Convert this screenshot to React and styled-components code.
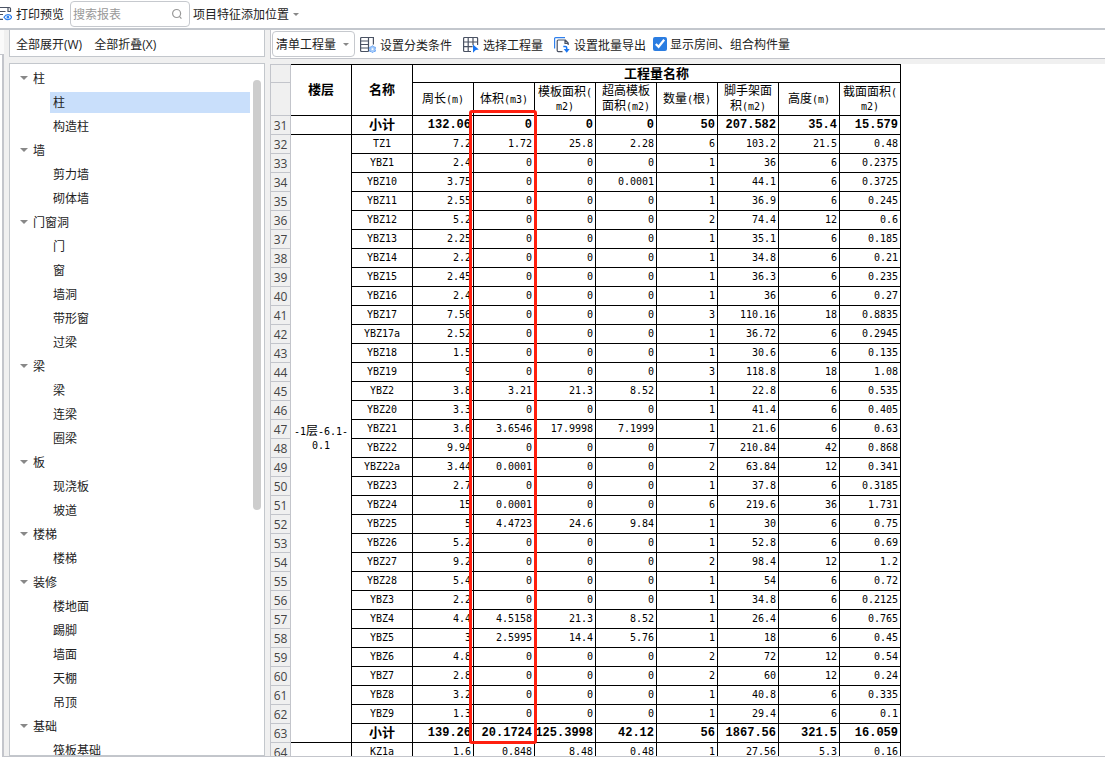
import React, { useState } from "react";
import styled, { createGlobalStyle } from "styled-components";

const GlobalStyle = createGlobalStyle`
  * {
    box-sizing: border-box;
  }
  body {
    margin: 0;
    background: #fff;
    color: #222;
    font-family: "Open Sans", "Noto Sans CJK SC", sans-serif;
    font-size: 12px;
  }
  button, input, select {
    font: inherit;
    color: inherit;
  }
`;

const treeData = [
  { name: "柱", items: ["柱", "构造柱"] },
  { name: "墙", items: ["剪力墙", "砌体墙"] },
  { name: "门窗洞", items: ["门", "窗", "墙洞", "带形窗", "过梁"] },
  { name: "梁", items: ["梁", "连梁", "圈梁"] },
  { name: "板", items: ["现浇板", "坡道"] },
  { name: "楼梯", items: ["楼梯"] },
  { name: "装修", items: ["楼地面", "踢脚", "墙面", "天棚", "吊顶"] },
  { name: "基础", items: ["筏板基础"] },
];

const columns = [
  [["周长", "(m)"]],
  [["体积", "(m3)"]],
  [["模板面积", "("], ["", "m2)"]],
  [["超高模板", ""], ["面积", "(m2)"]],
  [["数量", "("], ["根", ")"]],
  [["脚手架面", ""], ["积", "(m2)"]],
  [["高度", "(m)"]],
  [["截面面积", "("], ["", "m2)"]],
];

const subtotal = ["132.06", "0", "0", "0", "50", "207.582", "35.4", "15.579"];

const floorRows = [
  ["TZ1", "7.2", "1.72", "25.8", "2.28", "6", "103.2", "21.5", "0.48"],
  ["YBZ1", "2.4", "0", "0", "0", "1", "36", "6", "0.2375"],
  ["YBZ10", "3.75", "0", "0", "0.0001", "1", "44.1", "6", "0.3725"],
  ["YBZ11", "2.55", "0", "0", "0", "1", "36.9", "6", "0.245"],
  ["YBZ12", "5.2", "0", "0", "0", "2", "74.4", "12", "0.6"],
  ["YBZ13", "2.25", "0", "0", "0", "1", "35.1", "6", "0.185"],
  ["YBZ14", "2.2", "0", "0", "0", "1", "34.8", "6", "0.21"],
  ["YBZ15", "2.45", "0", "0", "0", "1", "36.3", "6", "0.235"],
  ["YBZ16", "2.4", "0", "0", "0", "1", "36", "6", "0.27"],
  ["YBZ17", "7.56", "0", "0", "0", "3", "110.16", "18", "0.8835"],
  ["YBZ17a", "2.52", "0", "0", "0", "1", "36.72", "6", "0.2945"],
  ["YBZ18", "1.5", "0", "0", "0", "1", "30.6", "6", "0.135"],
  ["YBZ19", "9", "0", "0", "0", "3", "118.8", "18", "1.08"],
  ["YBZ2", "3.8", "3.21", "21.3", "8.52", "1", "22.8", "6", "0.535"],
  ["YBZ20", "3.3", "0", "0", "0", "1", "41.4", "6", "0.405"],
  ["YBZ21", "3.6", "3.6546", "17.9998", "7.1999", "1", "21.6", "6", "0.63"],
  ["YBZ22", "9.94", "0", "0", "0", "7", "210.84", "42", "0.868"],
  ["YBZ22a", "3.44", "0.0001", "0", "0", "2", "63.84", "12", "0.341"],
  ["YBZ23", "2.7", "0", "0", "0", "1", "37.8", "6", "0.3185"],
  ["YBZ24", "15", "0.0001", "0", "0", "6", "219.6", "36", "1.731"],
  ["YBZ25", "5", "4.4723", "24.6", "9.84", "1", "30", "6", "0.75"],
  ["YBZ26", "5.2", "0", "0", "0", "1", "52.8", "6", "0.69"],
  ["YBZ27", "9.2", "0", "0", "0", "2", "98.4", "12", "1.2"],
  ["YBZ28", "5.4", "0", "0", "0", "1", "54", "6", "0.72"],
  ["YBZ3", "2.2", "0", "0", "0", "1", "34.8", "6", "0.2125"],
  ["YBZ4", "4.4", "4.5158", "21.3", "8.52", "1", "26.4", "6", "0.765"],
  ["YBZ5", "3", "2.5995", "14.4", "5.76", "1", "18", "6", "0.45"],
  ["YBZ6", "4.8", "0", "0", "0", "2", "72", "12", "0.54"],
  ["YBZ7", "2.8", "0", "0", "0", "2", "60", "12", "0.24"],
  ["YBZ8", "3.2", "0", "0", "0", "1", "40.8", "6", "0.335"],
  ["YBZ9", "1.3", "0", "0", "0", "1", "29.4", "6", "0.1"],
  ["小计", "139.26", "20.1724", "125.3998", "42.12", "56", "1867.56", "321.5", "16.059"],
];

const nextFloorRow = ["KZ1a", "1.6", "0.848", "8.48", "0.48", "1", "27.56", "5.3", "0.16"];

const Page = styled.div`
  display: flex;
  flex-direction: column;
  height: 100vh;
  padding-bottom: 18px;
  overflow: hidden;
`;

const TopBar = styled.header`
  display: flex;
  align-items: center;
  flex: none;
  height: 30px;
  border-bottom: 2px solid #c3c7cd;
  white-space: nowrap;
`;

const PlainButton = styled.button`
  display: flex;
  align-items: center;
  gap: 4px;
  height: 24px;
  padding: 0;
  border: 0;
  background: none;
  white-space: nowrap;
`;

const SearchBox = styled.label`
  display: flex;
  align-items: center;
  width: 120px;
  height: 26px;
  margin: 0 3px 0 6px;
  padding: 0 6px 0 2px;
  border: 1px solid #c6c9ce;
  border-radius: 4px;
  color: #999;

  input {
    flex: 1;
    min-width: 0;
    padding: 0;
    border: 0;
    outline: 0;
    background: none;
  }
  input::placeholder {
    color: #999;
    opacity: 1;
  }
`;

const Caret = styled.span`
  width: 0;
  border: ${(p) => p.$size}px solid transparent;
  border-top-color: #888;
  border-bottom: 0;
`;

const Body = styled.div`
  display: flex;
  flex: 1;
  min-height: 0;
  background: #f0f0f0;
  border-bottom: 1px solid #c3c5cb;
`;

const Rail = styled.div`
  flex: none;
  width: 4px;
  margin-right: 5px;
  padding-top: 24px;
  background: #fafafa;

  &::after {
    content: "";
    display: block;
    height: 100%;
    background: #fff;
    border-top: 1px solid #c3c5cb;
    border-right: 2px solid #c3c5cb;
  }
`;

const Sidebar = styled.aside`
  display: flex;
  flex-direction: column;
  flex: none;
  gap: 6px;
  width: 256px;
  margin-right: 5px;
`;

const SidebarActions = styled.div`
  display: flex;
  align-items: center;
  gap: 12px;
  flex: none;
  height: 27px;
  padding: 2px 6px 0;
  background: #fff;
  border: 1px solid #c3c7cc;
  border-top: 0;
`;

const TreePanel = styled.nav`
  display: flex;
  flex: 1;
  min-height: 0;
  background: #fff;
  border: 1px solid #c3c7cc;
  overflow: hidden;
`;

const Tree = styled.ul`
  flex: 1;
  margin: 0;
  padding: 2px 0 0;
  list-style: none;

  ul {
    margin: 0;
    padding: 0 0 0 40px;
    list-style: none;
  }
  ul li {
    height: 24px;
    padding-top: 2px;
  }
`;

const Group = styled.button`
  display: flex;
  align-items: center;
  gap: 5px;
  width: 100%;
  height: 24px;
  padding: 0 0 0 10px;
  border: 0;
  background: none;
`;

const Leaf = styled.button`
  display: block;
  width: 100%;
  height: 21px;
  padding: 0 3px;
  border: 0;
  background: ${(p) => (p.$selected ? "#c9dffb" : "none")};
  line-height: 21px;
  text-align: left;
`;

const Scrollbar = styled.div`
  flex: none;
  width: 8px;
  height: 430px;
  margin: 16px 3px 0;
  border-radius: 4px;
  background: #cdcdcd;
`;

const Content = styled.main`
  display: flex;
  flex: 1;
  flex-direction: column;
  gap: 5px;
  min-width: 0;
`;

const Toolbar = styled.div`
  display: flex;
  align-items: center;
  flex: none;
  height: 29px;
  padding-left: 1px;
  background: #fff;
  border: solid #c3c5cb;
  border-width: 0 0 1px 1px;
`;

const Picker = styled.div`
  display: flex;
  align-items: center;
  width: 83px;
  height: 26px;
  padding-right: 5px;
  border: 1px solid #c6c9ce;
  border-radius: 4px;

  select {
    flex: 1;
    min-width: 0;
    padding: 0 0 0 3px;
    border: 0;
    outline: 0;
    background: none;
    appearance: none;
  }
`;

const Tools = styled.div`
  display: flex;
  gap: 11px;
  margin: 0 7px 0 5px;
  padding-top: 2px;
`;

const CheckLabel = styled.label`
  display: flex;
  align-items: center;
  gap: 3px;
  white-space: nowrap;

  input {
    width: 14px;
    height: 14px;
    margin: 0;
    accent-color: #2b7de1;
  }
`;

const Sheet = styled.div`
  flex: 1;
  min-height: 0;
  overflow: hidden;
  background: #fff;
`;

const SheetInner = styled.div`
  position: relative;
  width: max-content;
`;

const Table = styled.table`
  width: 631px;
  table-layout: fixed;
  border-collapse: separate;
  border-spacing: 0;
  color: #000;
  font-family: "DejaVu Sans Mono", "Noto Sans CJK SC", monospace;
  font-size: 10px;
  line-height: 14px;

  th, td {
    padding: 0;
    border: solid #000;
    border-width: 0 1px 1px 0;
    white-space: nowrap;
  }
  thead tr:first-child > * {
    border-top-width: 1px;
  }
`;

const HeadRow = styled.tr`
  height: ${(p) => p.$height}px;

  th {
    font-weight: ${(p) => (p.$strong ? "bold" : "normal")};
    font-size: ${(p) => (p.$strong ? 13 : 10)}px;
  }
`;

const DataRow = styled.tr`
  height: 19px;
`;

const Cell = styled.td`
  text-align: right;
  font-family: ${(p) => (p.$bold ? '"Liberation Mono", monospace' : "inherit")};
  font-size: ${(p) => (p.$bold ? 12 : 10)}px;
  font-weight: ${(p) => (p.$bold ? "bold" : "normal")};

  &&& {
    padding-right: 2px;
  }
`;

const NameCell = styled.th`
  font-size: ${(p) => (p.$bold ? 13 : 10)}px;
  font-weight: ${(p) => (p.$bold ? "bold" : "normal")};
  text-align: center;
`;

const RowNumber = styled.th`
  background: #f0f0f0;
  color: #444;
  font-family: "Open Sans", sans-serif;
  font-size: 12px;
  font-weight: normal;
  text-align: center;

  &&& {
    padding-top: 2px;
    border-color: #c3c5cb;
    border-left-width: 1px;
  }
`;

const Han = styled.span`
  font-size: 12px;
`;

const RedFrame = styled.div`
  position: absolute;
  top: 46px;
  left: 199px;
  width: 68px;
  height: 634px;
  border: 3px solid #ff1f0f;
  border-radius: 3px;
  pointer-events: none;
`;

function PrintIcon() {
  return (
    <svg width="12" height="18" viewBox="0 0 12 18" fill="none" stroke="#4a5263" strokeWidth="1.2">
      <path d="M0 2.5h9.2a1.3 1.3 0 0 1 1.3 1.3v2.7H8V2.8M0 6.5h5.5M0 9.5h3M0 14.3h3" />
      <path d="M4 12.2c2-3.4 6-3.4 7.8 0-2 3.2-6 3.2-7.8 0z" stroke="#2f80ed" />
      <circle cx="7.9" cy="12.2" r=".8" fill="#2f80ed" stroke="#2f80ed" />
    </svg>
  );
}

function SearchIcon() {
  return (
    <svg width="12" height="12" viewBox="0 0 12 12" fill="none" stroke="#999" strokeWidth="1.2">
      <circle cx="5.6" cy="5.5" r="4" />
      <path d="M8.4 8.4l2 2.2" />
    </svg>
  );
}

function ClassifyIcon() {
  return (
    <svg width="16" height="16" viewBox="0 0 16 16" fill="none" stroke="#4a5263" strokeWidth="1.2">
      <path d="M8.5 14.5H1.6a1 1 0 0 1-1-1v-12a1 1 0 0 1 1-1h11.8v7M8.5.5v14M.6 4h8M.6 7.5h8M.6 11h8" />
      <path
        d="M12.5 8.6l1.2 1.3 1.8.4-.5 2 .5 1.9-1.8.4-1.2 1.2-1.2-1.2-1.8-.4.5-1.9-.5-2 1.8-.4z"
        fill="#a9cdfa"
        stroke="#6aa5f4"
        strokeWidth="1"
      />
      <circle cx="12.5" cy="12.2" r=".9" fill="#fff" stroke="none" />
    </svg>
  );
}

function SelectIcon() {
  return (
    <svg width="16" height="16" viewBox="0 0 16 16" fill="none" stroke="#4a5263" strokeWidth="1.2">
      <path d="M8 14.5H1.6a1 1 0 0 1-1-1v-12a1 1 0 0 1 1-1h12a1 1 0 0 1 1 1V8M.6 5h14M.6 9.7h9M5.2.5v14M10 .5v7.8" />
      <path d="M10 7.6l5.8 4.8-3 .5-2.8 2.8z" fill="#1976f3" stroke="none" />
    </svg>
  );
}

function ExportIcon() {
  return (
    <svg width="16" height="16" viewBox="0 0 16 16" fill="none" stroke="#4a5263" strokeWidth="1.2">
      <path d="M.6 11.5V1.6a1 1 0 0 1 1-1H11" stroke="#2f80ed" />
      <path d="M8.5 14.6H4.2a1 1 0 0 1-1-1V4a1 1 0 0 1 1-1h7.2l2.8 3v2M11 3v3.3h3.2" />
      <path d="M9.3 9.4h2a1.4 1.4 0 0 1 1.4 1.4v2" stroke="#1976f3" strokeWidth="1.5" />
      <path d="M9.7 12h6l-3 3.8z" fill="#1976f3" stroke="none" />
    </svg>
  );
}

function HeaderText({ parts }) {
  const wraps = parts.length > 1 && parts[1][0] !== "根";
  return parts.map(([han, latin], i) => (
    <React.Fragment key={i}>
      {wraps && i > 0 && <br />}
      {han && <Han>{han}</Han>}
      {latin}
    </React.Fragment>
  ));
}

function Values({ row, bold }) {
  return row.map((value, i) => (
    <Cell key={i} $bold={bold}>
      {value}
    </Cell>
  ));
}

function QuantityTable() {
  return (
    <Table>
      <colgroup>
        <col style={{ width: 21 }} />
        <col span={10} />
      </colgroup>
      <thead>
        <HeadRow $height={19} $strong>
          <RowNumber as="td" />
          <th rowSpan={2}>楼层</th>
          <th rowSpan={2}>名称</th>
          <th colSpan={8}>工程量名称</th>
        </HeadRow>
        <HeadRow $height={33}>
          <RowNumber as="td" />
          {columns.map((parts) => (
            <th key={parts[0][0]}>
              <HeaderText parts={parts} />
            </th>
          ))}
        </HeadRow>
      </thead>
      <tbody>
        <DataRow>
          <RowNumber>31</RowNumber>
          <td />
          <NameCell $bold>小计</NameCell>
          <Values row={subtotal} bold />
        </DataRow>
        {floorRows.map(([name, ...values], i) => {
          const bold = name === "小计";
          return (
            <DataRow key={name}>
              <RowNumber>{32 + i}</RowNumber>
              {i === 0 && (
                <NameCell rowSpan={floorRows.length}>
                  -1<Han>层</Han>-6.1-
                  <br />
                  0.1
                </NameCell>
              )}
              <NameCell $bold={bold}>{name}</NameCell>
              <Values row={values} bold={bold} />
            </DataRow>
          );
        })}
        <DataRow>
          <RowNumber>64</RowNumber>
          <td />
          <NameCell>{nextFloorRow[0]}</NameCell>
          <Values row={nextFloorRow.slice(1)} />
        </DataRow>
      </tbody>
    </Table>
  );
}

function App() {
  const [selected, setSelected] = useState("柱/柱");
  const [showRooms, setShowRooms] = useState(true);

  return (
    <Page>
      <GlobalStyle />
      <TopBar>
        <PlainButton>
          <PrintIcon />
          打印预览
        </PlainButton>
        <SearchBox>
          <input type="text" placeholder="搜索报表" aria-label="搜索报表" />
          <SearchIcon />
        </SearchBox>
        <PlainButton>
          项目特征添加位置
          <Caret $size={3} />
        </PlainButton>
      </TopBar>
      <Body>
        <Rail />
        <Sidebar>
          <SidebarActions>
            <PlainButton>全部展开(W)</PlainButton>
            <PlainButton>全部折叠(X)</PlainButton>
          </SidebarActions>
          <TreePanel>
            <Tree>
              {treeData.map((group) => (
                <li key={group.name}>
                  <Group>
                    <Caret $size={4} />
                    {group.name}
                  </Group>
                  <ul>
                    {group.items.map((item) => {
                      const id = `${group.name}/${item}`;
                      return (
                        <li key={id}>
                          <Leaf $selected={id === selected} onClick={() => setSelected(id)}>
                            {item}
                          </Leaf>
                        </li>
                      );
                    })}
                  </ul>
                </li>
              ))}
            </Tree>
            <Scrollbar />
          </TreePanel>
        </Sidebar>
        <Content>
          <Toolbar>
            <Picker>
              <select aria-label="工程量类型">
                <option>清单工程量</option>
              </select>
              <Caret $size={3} />
            </Picker>
            <Tools>
              <PlainButton>
                <ClassifyIcon />
                设置分类条件
              </PlainButton>
              <PlainButton>
                <SelectIcon />
                选择工程量
              </PlainButton>
              <PlainButton>
                <ExportIcon />
                设置批量导出
              </PlainButton>
            </Tools>
            <CheckLabel>
              <input
                type="checkbox"
                checked={showRooms}
                onChange={(e) => setShowRooms(e.target.checked)}
              />
              显示房间、组合构件量
            </CheckLabel>
          </Toolbar>
          <Sheet>
            <SheetInner>
              <QuantityTable />
              <RedFrame />
            </SheetInner>
          </Sheet>
        </Content>
      </Body>
    </Page>
  );
}

export default App;
